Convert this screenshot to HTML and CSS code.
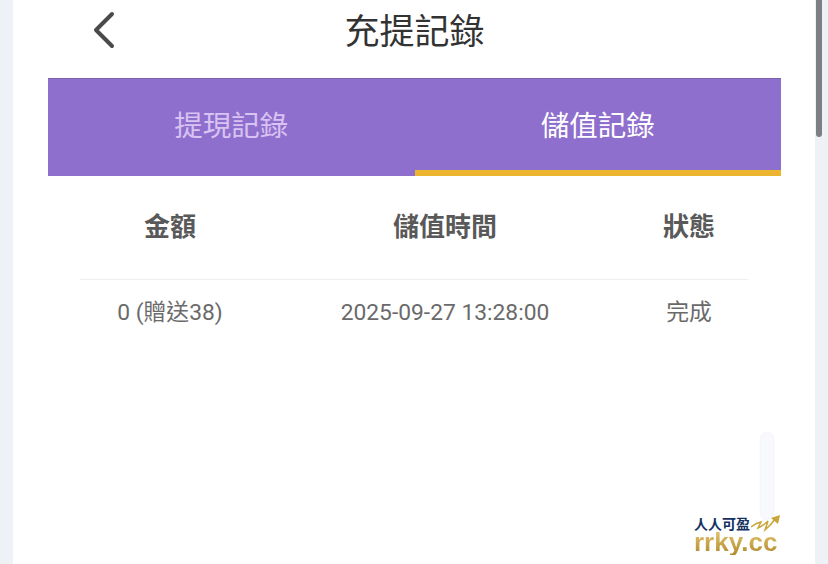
FILE: index.html
```html
<!DOCTYPE html>
<html lang="zh-Hant">
<head>
    <meta charset="UTF-8">
    <meta name="viewport" content="width=device-width, initial-scale=1.0">
    <title>充提記錄</title>
    <link rel="stylesheet" href="styles.css">
</head>
<body>
    <div class="page">
        <!-- Header -->
        <header class="top-bar">
            <a class="back" href="#" aria-label="返回">
                <svg width="24" height="38" viewBox="0 0 24 38">
                    <path d="M20 3 L4 19 L20 35" fill="none" stroke="#4a4a4a" stroke-width="4" stroke-linecap="round" stroke-linejoin="round"/>
                </svg>
            </a>
            <h1 class="title">充提記錄</h1>
        </header>

        <!-- Tabs -->
        <nav class="tabs">
            <div class="tab">提現記錄</div>
            <div class="tab active">儲值記錄</div>
        </nav>

        <!-- Records -->
        <section class="records">
            <div class="row head">
                <div>金額</div>
                <div>儲值時間</div>
                <div>狀態</div>
            </div>
            <div class="row">
                <div>0 (贈送38)</div>
                <div>2025-09-27 13:28:00</div>
                <div>完成</div>
            </div>
        </section>

        <div class="float-pill"></div>

        <div class="watermark">
            <div class="wm-top">
                <span class="wm-cn">人人可盈</span>
                <svg class="wm-arrow" width="30" height="20" viewBox="0 0 30 20">
                    <path d="M1 12 Q6 8 11 7 L8 13 Q13 11 18 6 L15 15 Q21 10 25 4" fill="none" stroke="#c9a53a" stroke-width="1.5"/>
                    <path d="M21 3 L30 0 L28 9 Z" fill="#c9a53a"/>
                </svg>
            </div>
            <div class="wm-url">rrky.cc</div>
        </div>
    </div>

    <div class="scrollbar"><div class="thumb"></div></div>
</body>
</html>
```

FILE: styles.css
```css
* {
    margin: 0;
    padding: 0;
    box-sizing: border-box;
}

html, body {
    height: 100%;
    overflow: hidden;
}

body {
    font-family: Roboto, "Noto Sans CJK TC", sans-serif;
    background: #eef2f7;
    color: #555;
    display: flex;
    padding-left: 13px;
    position: relative;
}

.page {
    position: relative;
    width: 802px;
    height: 564px;
    background: #fff;
    padding: 0 34px 0 35px;
}

/* Header */
.top-bar {
    position: relative;
    height: 78px;
    display: flex;
    align-items: center;
    justify-content: center;
}

.back {
    position: absolute;
    left: 44px;
    top: 11px;
    display: block;
    height: 38px;
}

.title {
    font-size: 35px;
    font-weight: 400;
    color: #333;
    line-height: 1;
    margin-top: -14px;
}

/* Tabs */
.tabs {
    display: flex;
    height: 98px;
    background: #8f6fcd;
    border-top: 1px solid #7f64ad;
}

.tab {
    flex: 1;
    display: flex;
    align-items: center;
    justify-content: center;
    font-size: 28.5px;
    color: #d8c3f2;
    padding-bottom: 8px;
}

.tab.active {
    color: #fff;
    border-bottom: 6px solid #ebb52f;
    border-radius: 4px 0 0 0;
    padding-bottom: 2px;
}

/* Records */
.records {
    padding: 0 33px 0 32px;
}

.row {
    display: grid;
    grid-template-columns: 180px 370px 1fr;
    text-align: center;
    font-size: 22.8px;
    color: #6a6a6a;
    height: 66px;
    align-items: baseline;
    padding-top: 14px;
}

.row.head {
    height: 104px;
    border-bottom: 1px solid #eee;
    font-size: 26px;
    font-weight: 700;
    color: #595959;
    align-items: center;
    padding-top: 0;
    padding-bottom: 6px;
}

/* Floating pill */
.float-pill {
    position: absolute;
    left: 748px;
    top: 433px;
    width: 12px;
    height: 86px;
    background: #f8f9fd;
    border-radius: 6px;
    box-shadow: 0 0 3px #e4e6f0;
}

/* Watermark */
.watermark {
    position: absolute;
    left: 681px;
    top: 515px;
    width: 90px;
}

.wm-top {
    position: relative;
    height: 14px;
}

.wm-cn {
    font-size: 14px;
    font-weight: 700;
    color: #14305f;
    line-height: 19px;
    white-space: nowrap;
    display: block;
}

.wm-arrow {
    position: absolute;
    left: 56px;
    top: 0;
}

.wm-url {
    font-family: "Liberation Sans", sans-serif;
    font-size: 26px;
    font-weight: 700;
    background: linear-gradient(180deg, #e6c976, #b08a2c);
    background-clip: text;
    -webkit-background-clip: text;
    -webkit-text-fill-color: transparent;
    line-height: 26px;
    white-space: nowrap;
}

/* Scrollbar */
.scrollbar {
    position: absolute;
    left: 816px;
    top: 0;
    width: 12px;
    height: 100%;
}

.thumb {
    width: 6px;
    height: 137px;
    background: #7c7f84;
    border-radius: 0 0 3px 3px;
}
```
